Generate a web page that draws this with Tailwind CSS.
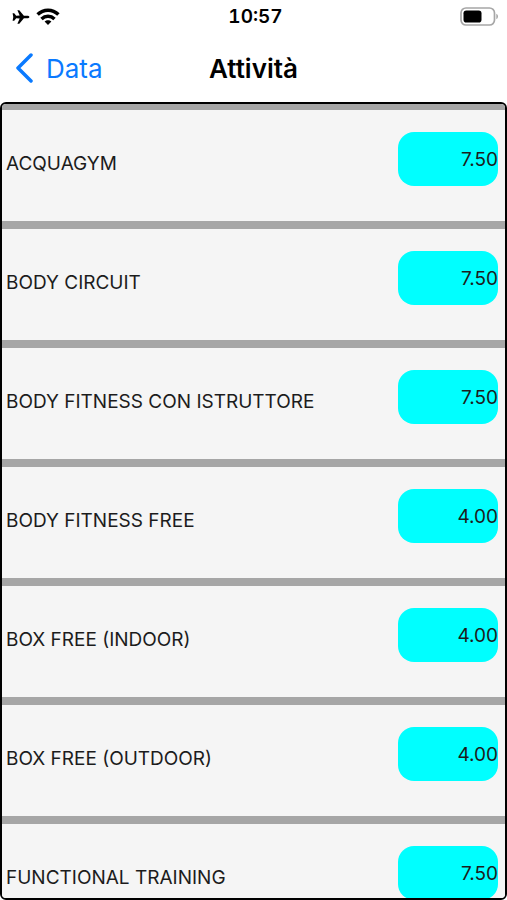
<!DOCTYPE html>
<html lang="it">

<head>
    <meta charset="UTF-8">
    <meta name="viewport" content="width=device-width, initial-scale=1">
    <title>Attività</title>
    <script src="https://cdn.jsdelivr.net/npm/@tailwindcss/browser@4"></script>
</head>

<body class="flex h-screen flex-col bg-white font-['Inter',sans-serif] text-black">

    <!-- status bar -->
    <div class="grid h-[34px] grid-cols-3 items-center pr-2 pl-3">
        <div class="flex items-center gap-1.5">
            <svg class="h-4 w-[18px]" viewBox="0 0 18 16" aria-hidden="true">
                <path d="M17.4 8c0-.8-1.100-1.300-2.300-1.300h-3.200L7.300 1.200H5.400l2.300 5.400-3.500.2L2.200 4.300H.6L1.300 8l-.7 3.700h1.600l2-2.500 3.500.2-2.300 5.400h1.900l4.600-5.500h3.200c1.200 0 2.300-.5 2.300-1.300z" />
            </svg>
            <svg class="h-[18px] w-6" viewBox="0 0 24 18" fill="none" stroke="#000" stroke-width="3.500" aria-hidden="true">
                <path d="M1.600 6.600C7.500.8 16.500.8 22.400 6.600" />
                <path d="M5.500 10.900c3.700-3.500 9.300-3.500 13 0" />
                <path d="M8.600 13.600c1.900-1.800 4.900-1.800 6.800 0L12 17z" fill="#000" stroke="none" />
            </svg>
        </div>
        <span class="text-center text-[19px] font-semibold tabular-nums">10:57</span>
        <svg class="h-5 w-[39px] justify-self-end" viewBox="0 0 39 20" aria-hidden="true">
            <rect x="1" y="1" width="33.500" height="17" rx="5" fill="none" stroke="#a6a6a6" stroke-width="1.700" />
            <rect x="3.500" y="3.500" width="18" height="12" rx="2.800" />
            <path d="M36.300 6.800v5.400c1-.4 1.700-1.500 1.700-2.700s-.7-2.300-1.700-2.700z" fill="#a6a6a6" />
        </svg>
    </div>

    <!-- nav bar -->
    <header class="grid h-[68px] grid-cols-3 items-center px-4">
        <a href="#" class="flex items-center gap-3 text-[26px] text-[#0a7aff]">
            <svg class="h-8 w-[18px]" viewBox="0 0 18 32" fill="none" stroke="currentColor" stroke-width="3.500" stroke-linecap="round" stroke-linejoin="round" aria-hidden="true">
                <path d="M15 3L2 16l13 13" />
            </svg>
            Data
        </a>
        <h1 class="text-center text-[26px] font-semibold">Attività</h1>
    </header>

    <ul class="min-h-0 flex-1 overflow-y-auto rounded-md border-2 border-black bg-[#f5f5f5] text-[19px] text-[#1c1c1c] [scrollbar-width:none]">
        <li class="-mt-0.5 flex h-[119px] items-start justify-between border-t-8 border-[#a6a6a6] pt-[22px] pr-[7px] pl-1">
            <span class="mt-1 leading-[56px]">ACQUAGYM</span>
            <span class="h-[54px] w-[100px] rounded-2xl bg-[#00ffff] text-right leading-[56px]">7.50</span>
        </li>
        <li class="flex h-[119px] items-start justify-between border-t-8 border-[#a6a6a6] pt-[22px] pr-[7px] pl-1">
            <span class="mt-1 leading-[56px]">BODY CIRCUIT</span>
            <span class="h-[54px] w-[100px] rounded-2xl bg-[#00ffff] text-right leading-[56px]">7.50</span>
        </li>
        <li class="flex h-[119px] items-start justify-between border-t-8 border-[#a6a6a6] pt-[22px] pr-[7px] pl-1">
            <span class="mt-1 leading-[56px]">BODY FITNESS CON ISTRUTTORE</span>
            <span class="h-[54px] w-[100px] rounded-2xl bg-[#00ffff] text-right leading-[56px]">7.50</span>
        </li>
        <li class="flex h-[119px] items-start justify-between border-t-8 border-[#a6a6a6] pt-[22px] pr-[7px] pl-1">
            <span class="mt-1 leading-[56px]">BODY FITNESS FREE</span>
            <span class="h-[54px] w-[100px] rounded-2xl bg-[#00ffff] text-right leading-[56px]">4.00</span>
        </li>
        <li class="flex h-[119px] items-start justify-between border-t-8 border-[#a6a6a6] pt-[22px] pr-[7px] pl-1">
            <span class="mt-1 leading-[56px]">BOX FREE (INDOOR)</span>
            <span class="h-[54px] w-[100px] rounded-2xl bg-[#00ffff] text-right leading-[56px]">4.00</span>
        </li>
        <li class="flex h-[119px] items-start justify-between border-t-8 border-[#a6a6a6] pt-[22px] pr-[7px] pl-1">
            <span class="mt-1 leading-[56px]">BOX FREE (OUTDOOR)</span>
            <span class="h-[54px] w-[100px] rounded-2xl bg-[#00ffff] text-right leading-[56px]">4.00</span>
        </li>
        <li class="flex h-[119px] items-start justify-between border-t-8 border-[#a6a6a6] pt-[22px] pr-[7px] pl-1">
            <span class="mt-1 leading-[56px]">FUNCTIONAL TRAINING</span>
            <span class="h-[54px] w-[100px] rounded-2xl bg-[#00ffff] text-right leading-[56px]">7.50</span>
        </li>
    </ul>

</body>

</html>
